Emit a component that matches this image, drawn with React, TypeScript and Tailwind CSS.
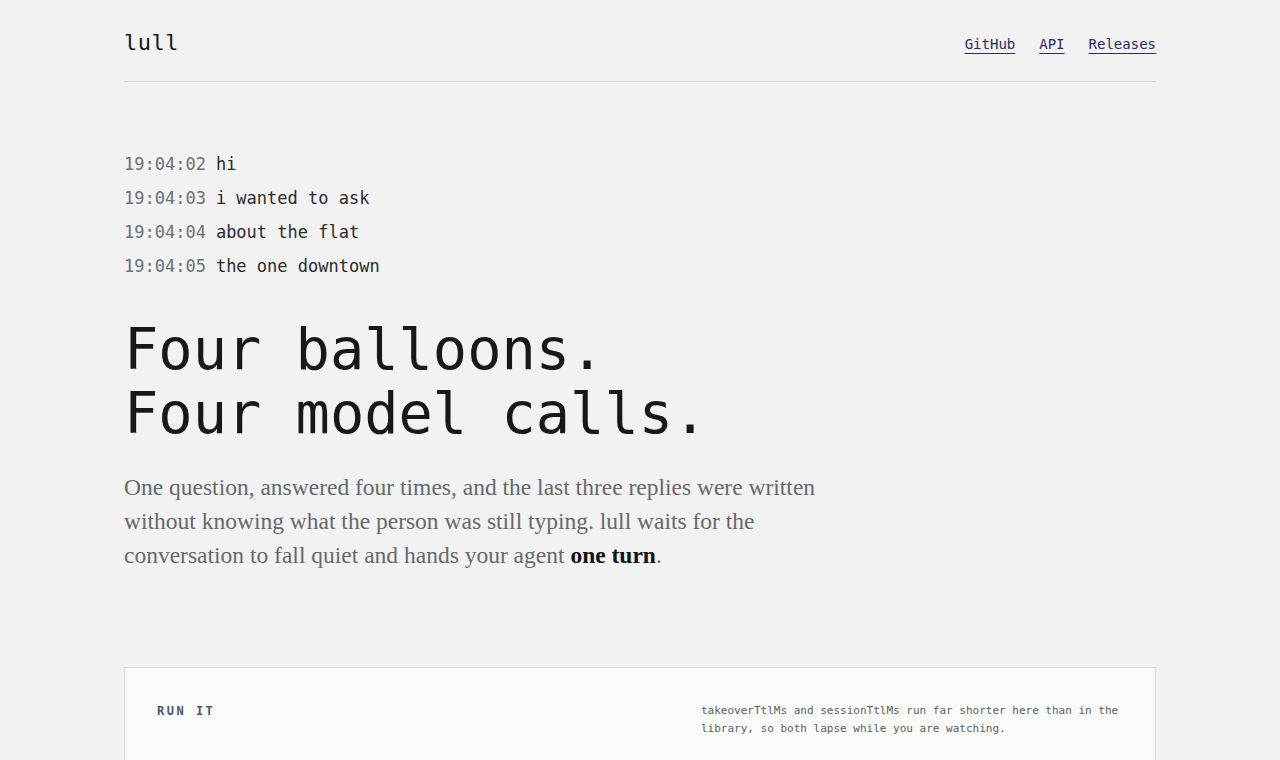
import React from "react";

const mono = "font-['DejaVu_Sans_Mono','Liberation_Mono',monospace]";
const serif = "font-['Liberation_Serif','DejaVu_Serif',serif]";

const lines = [
  { time: "19:04:02", text: "hi" },
  { time: "19:04:03", text: "i wanted to ask" },
  { time: "19:04:04", text: "about the flat" },
  { time: "19:04:05", text: "the one downtown" },
];

const navLinks = ["GitHub", "API", "Releases"];

export default function App() {
  return (
    <div className={`min-h-screen bg-[#f1f2f1] text-[#16181a] ${mono}`}>
      <div className="mx-auto w-[1032px]">
        <header className="flex h-[82px] items-center justify-between border-b border-[#d9dbd9] pt-1">
          <div className="text-[22px] leading-none tracking-[0.5px]">lull</div>
          <nav className="flex items-center gap-6 pt-1 text-[14px]">
            {navLinks.map((link) => (
              <a
                key={link}
                href="#"
                className="text-[#2b2b63] underline decoration-[#2b2b63] underline-offset-[4px]"
              >
                {link}
              </a>
            ))}
          </nav>
        </header>

        <section className="pt-[65px]">
          <div className="flex flex-col text-[17px] leading-[34px]">
            {lines.map((line) => (
              <div key={line.time} className="flex gap-[10px]">
                <span className="text-[#6c7175]">{line.time}</span>
                <span className="text-[#2a2c2e]">{line.text}</span>
              </div>
            ))}
          </div>

          <h1 className="mt-[34px] text-[57px] font-medium leading-[64px]">
            Four balloons.
            <br />
            Four model calls.
          </h1>

          <p className={`mt-[25px] w-[720px] text-[23.5px] leading-[34px] text-[#65696c] ${serif}`}>
            One question, answered four times, and the last three replies were written
            <br />
            without knowing what the person was still typing. lull waits for the
            <br />
            conversation to fall quiet and hands your agent{" "}
            <strong className="font-semibold text-[#111314]">one turn</strong>.
          </p>
        </section>

        <section className="mt-[95px] border border-[#d9dbd9] bg-[#fafaf8] px-8 pb-10 pt-[34px]">
          <div className="flex justify-between">
            <div className="text-[12px] font-bold leading-[18px] tracking-[2.5px] text-[#4a5866]">
              RUN IT
            </div>
            <p className="w-[422px] text-[11px] leading-[18px] text-[#5b5f63]">
              takeoverTtlMs and sessionTtlMs run far shorter here than in the library, so both
              lapse while you are watching.
            </p>
          </div>
        </section>
      </div>
    </div>
  );
}
